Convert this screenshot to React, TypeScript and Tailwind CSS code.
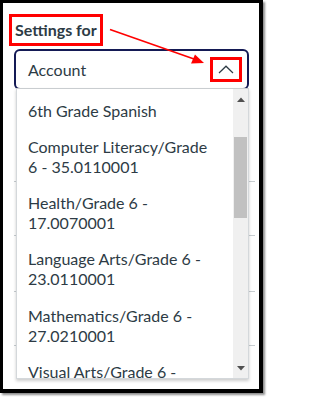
import React from "react";

const items: string[][] = [
  ["6th Grade Spanish"],
  ["Computer Literacy/Grade", "6 - 35.0110001"],
  ["Health/Grade 6 -", "17.0070001"],
  ["Language Arts/Grade 6 -", "23.0110001"],
  ["Mathematics/Grade 6 -", "27.0210001"],
  ["Visual Arts/Grade 6 -", "50.0110001"],
];

export default function App() {
  return (
    <div
      className="w-[269px] h-[399px] bg-white"
      style={{ fontFamily: "Lato, 'Noto Sans', sans-serif" }}
    >
      <div className="relative w-[263px] h-[393px] border-t-[3px] border-l-[3px] border-r-4 border-b-4 border-black bg-white shadow-[2px_2px_2px_rgba(0,0,0,0.45)] overflow-hidden">
        <div className="pl-[6px] pt-[11px]">
          <div className="w-[94px] h-[32px] border-[3px] border-[#ff0000] flex items-center pl-[3px] pb-[1px]">
            <span className="text-[16px] font-bold text-[#2d3b45] leading-none whitespace-nowrap">
              Settings for
            </span>
          </div>
        </div>
        <div className="pl-[11px] mt-[3px]">
          <div className="w-[235px] h-[41px] rounded-[6px] border-2 border-[#141a55] flex items-center justify-between pl-[12px] pr-[5px]">
            <span className="text-[16px] text-[#2d3b45] leading-5">Account</span>
            <div className="w-[32px] h-[25px] border-[3px] border-[#ff0000] flex items-center justify-center">
              <svg width="16" height="9" viewBox="0 0 16 9">
                <path d="M1 8 L8 1.2 L15 8" fill="none" stroke="#2d3b45" strokeWidth="1.2" />
              </svg>
            </div>
          </div>
        </div>
        {/* background rows behind dropdown */}
        <div className="ml-[11px] w-[241px]">
          <div className="h-[92px] border-b border-[#c7cdd1]" />
          <div className="h-[54px] border-b border-[#c7cdd1]" />
          <div className="h-[56px] border-b border-[#c7cdd1]" />
          <div className="h-[54px] border-b border-[#c7cdd1]" />
        </div>

        {/* dropdown list */}
        <div className="absolute left-[13px] top-[85px] w-[233px] h-[291px] bg-white border border-[#d4d8db] border-t-[#c9cdd0] shadow-[0_2px_3px_rgba(0,0,0,0.2)] flex overflow-hidden">
          <div className="flex-1 overflow-hidden pt-[4px]">
            {items.map((lines, i) => (
              <div
                key={i}
                className={`pl-[11px] py-[8px] text-[16px] leading-5 text-[#2d3b45] whitespace-nowrap ${i === 4 ? "pt-[9px]" : ""}`}
              >
                {lines.map((l, j) => (
                  <div key={j}>{l}</div>
                ))}
              </div>
            ))}
          </div>
          <div className="w-[15px] h-full bg-[#f0f0f0] flex flex-col items-center">
            <div className="h-[17px] w-full flex items-center justify-center pt-[3px]">
              <svg width="8" height="5" viewBox="0 0 8 5">
                <path d="M0 5 L4 0.5 L8 5 Z" fill="#505050" />
              </svg>
            </div>
            <div className="mt-[31px] w-[13px] h-[81px] bg-[#c1c1c1]" />
            <div className="flex-1" />
            <div className="h-[17px] w-full flex items-center justify-center pb-[2px]">
              <svg width="8" height="5" viewBox="0 0 8 5">
                <path d="M0 0 L4 4.5 L8 0 Z" fill="#505050" />
              </svg>
            </div>
          </div>
        </div>

        {/* red annotation arrow */}
        <svg
          className="absolute left-[-3px] top-[-3px] pointer-events-none"
          width="269"
          height="399"
          viewBox="0 0 269 399"
        >
          <line x1="110" y1="29.5" x2="194" y2="59" stroke="#ff0000" strokeWidth="1.6" />
          <path d="M204 63 L191 63.5 L195 54.5 Z" fill="#ff0000" />
        </svg>
      </div>
    </div>
  );
}
